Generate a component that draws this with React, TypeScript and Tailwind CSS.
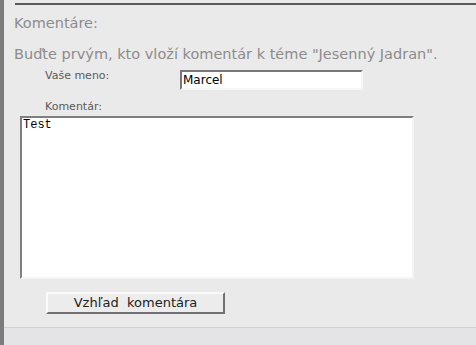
const App = () => {
  return (
    <div className="w-[476px] h-[345px] flex bg-[#eaeaea] overflow-hidden font-['DejaVu_Sans',sans-serif]">
      <div className="w-[4px] bg-[#7c7c7c]" />
      <div className="flex-1 flex flex-col">
        <div className="flex-1 pl-[10px] pt-[3px]">
          <div className="ml-[1px] border-t-2 border-[#595959]" />
          <p className="mt-[10px] text-[14.5px] leading-[16px] text-[#8c8c8c]">Komentáre:</p>
          <p className="mt-[15px] text-[14.5px] leading-[16px] text-[#8c8c8c] whitespace-nowrap">
            Buďte prvým, kto vloží komentár k téme "Jesenný Jadran".
          </p>
          <div className="flex items-start mt-[7px]">
            <span className="w-[135px] ml-[31px] text-[11px] leading-[13px] text-[#5a5a5a]">Vaše meno:</span>
            <input
              defaultValue="Marcel"
              className="mt-[1px] w-[183px] h-[20px] bg-white px-[1px] text-[12px] text-black border-2 border-t-[#777] border-l-[#777] border-r-[#f6f6f6] border-b-[#f6f6f6] outline-none"
            />
          </div>
          <p className="mt-[10px] ml-[31px] text-[11px] leading-[13px] text-[#5a5a5a]">Komentár:</p>
          <textarea
            defaultValue="Test"
            className="block mt-[3px] ml-[6px] w-[394px] h-[163px] resize-none bg-white px-[1px] text-[12px] leading-[14px] text-black font-['Liberation_Mono',monospace] border-2 border-t-[#7f7f7f] border-l-[#7f7f7f] border-r-[#f4f4f4] border-b-[#f4f4f4] outline-none"
          />
          <button className="mt-[13px] ml-[32px] w-[179px] h-[22px] bg-[#ececec] text-[13px] leading-[16px] text-[#222] whitespace-pre border-2 border-t-[#fafafa] border-l-[#fafafa] border-r-[#717171] border-b-[#717171]">
            {'Vzhľad  komentára'}
          </button>
        </div>
        <div className="h-[18px] border-t border-[#d2d2d4] bg-[#e4e4e7]" />
      </div>
    </div>
  );
};

export default App;
